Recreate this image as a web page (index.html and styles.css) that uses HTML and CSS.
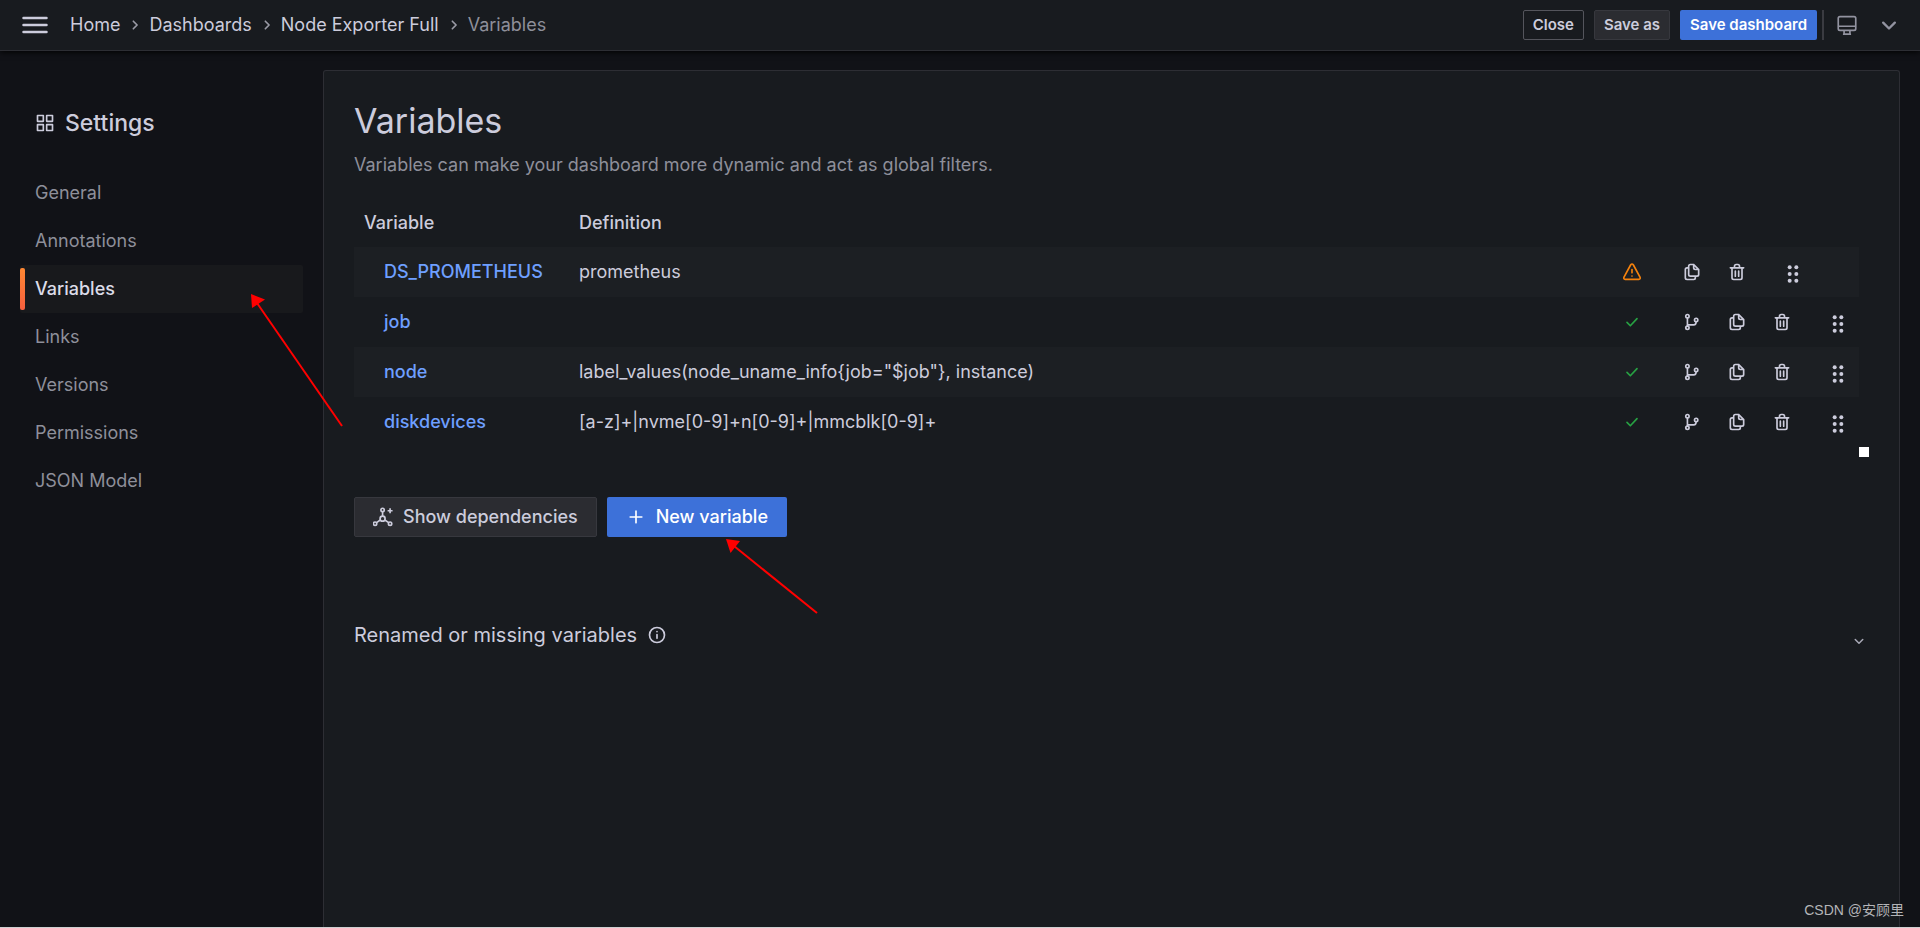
FILE: index.html
```html
<!DOCTYPE html>
<html lang="en">
<head>
<meta charset="utf-8">
<title>Variables - Node Exporter Full</title>
<link rel="stylesheet" href="styles.css">
</head>
<body>
<svg class="sprite" aria-hidden="true">
  <symbol id="apps" viewBox="0 0 24 24"><path fill="currentColor" d="M10,13H3a1,1,0,0,0-1,1v7a1,1,0,0,0,1,1h7a1,1,0,0,0,1-1V14A1,1,0,0,0,10,13ZM9,20H4V15H9ZM21,2H14a1,1,0,0,0-1,1v7a1,1,0,0,0,1,1h7a1,1,0,0,0,1-1V3A1,1,0,0,0,21,2ZM20,9H15V4h5Zm1,4H14a1,1,0,0,0-1,1v7a1,1,0,0,0,1,1h7a1,1,0,0,0,1-1V14A1,1,0,0,0,21,13Zm-1,7H15V15h5ZM10,2H3A1,1,0,0,0,2,3v7a1,1,0,0,0,1,1h7a1,1,0,0,0,1-1V3A1,1,0,0,0,10,2ZM9,9H4V4H9Z"/></symbol>
  <symbol id="copy" viewBox="0 0 24 24"><path fill="currentColor" d="M21,8.94a1.31,1.31,0,0,0-.06-.27l0-.09a1.07,1.07,0,0,0-.19-.28h0l-6-6h0a1.07,1.07,0,0,0-.28-.19.32.32,0,0,0-.09,0A.88.88,0,0,0,14.05,2H10A3,3,0,0,0,7,5V6H6A3,3,0,0,0,3,9V19a3,3,0,0,0,3,3h8a3,3,0,0,0,3-3V18h1a3,3,0,0,0,3-3V9S21,9,21,8.94ZM15,5.41,17.59,8H16a1,1,0,0,1-1-1ZM15,19a1,1,0,0,1-1,1H6a1,1,0,0,1-1-1V9A1,1,0,0,1,6,8H7v7a3,3,0,0,0,3,3h5Zm4-4a1,1,0,0,1-1,1H10a1,1,0,0,1-1-1V5a1,1,0,0,1,1-1h3V7a3,3,0,0,0,3,3h3Z"/></symbol>
  <symbol id="trash" viewBox="0 0 24 24"><path fill="currentColor" d="M10,18a1,1,0,0,0,1-1V11a1,1,0,0,0-2,0v6A1,1,0,0,0,10,18ZM20,6H16V5a3,3,0,0,0-3-3H11A3,3,0,0,0,8,5V6H4A1,1,0,0,0,4,8H5V19a3,3,0,0,0,3,3h8a3,3,0,0,0,3-3V8h1a1,1,0,0,0,0-2ZM10,5a1,1,0,0,1,1-1h2a1,1,0,0,1,1,1V6H10Zm7,14a1,1,0,0,1-1,1H8a1,1,0,0,1-1-1V8H17Zm-3-1a1,1,0,0,0,1-1V11a1,1,0,0,0-2,0v6A1,1,0,0,0,14,18Z"/></symbol>
  <symbol id="branch" viewBox="0 0 24 24"><g fill="none" stroke="currentColor" stroke-width="2"><circle cx="6.5" cy="5" r="2"/><circle cx="6.5" cy="19" r="2"/><circle cx="17" cy="9.5" r="2"/><path d="M6.5 7v10M6.500 15.500h7.500q3 0 3-4"/></g></symbol>
  <symbol id="drag" viewBox="0 0 24 24"><g fill="currentColor"><circle cx="8" cy="4" r="2.400"/><circle cx="16" cy="4" r="2.400"/><circle cx="8" cy="12" r="2.400"/><circle cx="16" cy="12" r="2.400"/><circle cx="8" cy="20" r="2.400"/><circle cx="16" cy="20" r="2.400"/></g></symbol>
  <symbol id="check" viewBox="0 0 24 24"><path fill="none" stroke="currentColor" stroke-width="2" stroke-linecap="round" stroke-linejoin="round" d="M6 12.500l4 4 8-8.500"/></symbol>
  <symbol id="warning" viewBox="0 0 24 24"><g fill="none" stroke="currentColor" stroke-width="2" stroke-linejoin="round" stroke-linecap="round"><path d="M10.300 3.600L2.400 18.200q-1 2.300 1.500 2.600h16.200q2.500-.3 1.500-2.600L13.700 3.600q-1.700-2.400-3.400 0Z"/><path d="M12 9v4M12 16.800v.1"/></g></symbol>
  <symbol id="down" viewBox="0 0 24 24"><path fill="none" stroke="currentColor" stroke-width="2" stroke-linecap="round" stroke-linejoin="round" d="M7 10l5 5 5-5"/></symbol>
  <symbol id="right" viewBox="0 0 24 24"><path fill="none" stroke="currentColor" stroke-width="2" stroke-linecap="round" stroke-linejoin="round" d="M10 7.500l4.500 4.500-4.500 4.500"/></symbol>
  <symbol id="monitor" viewBox="0 0 24 24"><g fill="none" stroke="currentColor" stroke-width="2"><rect x="1.500" y="2" width="21" height="16.500" rx="2"/><path d="M2 13.500h20M8.500 19v4M15.500 19v4M8 23h8" stroke-linecap="round"/></g></symbol>
  <symbol id="graph" viewBox="0 0 24 24"><g fill="none" stroke="currentColor" stroke-width="2"><circle cx="11.500" cy="3.500" r="2"/><circle cx="2.500" cy="20" r="2"/><circle cx="20.500" cy="20" r="2"/><circle cx="11.500" cy="14" r="3"/><path d="M11.500 5.500V11M4.200 18.800l4.600-3.200M18.800 18.800l-4.600-3.200M20.500 1.500v6M17.500 4.500h6"/></g></symbol>
  <symbol id="plus" viewBox="0 0 24 24"><path fill="none" stroke="currentColor" stroke-width="2" stroke-linecap="round" d="M12 5v14M5 12h14"/></symbol>
  <symbol id="info" viewBox="0 0 24 24"><g fill="none" stroke="currentColor" stroke-width="2" stroke-linecap="round"><circle cx="12" cy="12" r="9"/><path d="M12 11.500v4.500M12 8v.1"/></g></symbol>
</svg>

<header class="topbar">
  <button class="menu" type="button" aria-label="Open menu"><svg width="26" height="18" viewBox="0 0 26 18"><path stroke="currentColor" stroke-width="2.500" stroke-linecap="round" d="M1.500 2h23M1.500 9h23M1.500 16h23"/></svg></button>
  <nav class="crumbs" aria-label="Breadcrumbs">
    <a href="#">Home</a><svg class="sep"><use href="#right"/></svg>
    <a href="#">Dashboards</a><svg class="sep"><use href="#right"/></svg>
    <a href="#">Node Exporter Full</a><svg class="sep"><use href="#right"/></svg>
    <span class="current">Variables</span>
  </nav>
  <div class="actions">
    <button class="btn small outline" type="button">Close</button>
    <button class="btn small secondary" type="button">Save as</button>
    <button class="btn small primary" type="button">Save dashboard</button>
  </div>
  <span class="divider"></span>
  <button class="tool" type="button" aria-label="Kiosk mode"><svg class="icon"><use href="#monitor"/></svg></button>
  <button class="tool" type="button" aria-label="Toggle top bar"><svg class="icon large"><use href="#down"/></svg></button>
</header>

<div class="page">
  <aside class="sidebar">
    <h2 class="side-title"><svg class="icon"><use href="#apps"/></svg>Settings</h2>
    <nav class="side-nav">
      <a href="#">General</a>
      <a href="#">Annotations</a>
      <a href="#" class="active" aria-current="page">Variables</a>
      <a href="#">Links</a>
      <a href="#">Versions</a>
      <a href="#">Permissions</a>
      <a href="#">JSON Model</a>
    </nav>
  </aside>
  <main class="panel">
    <h1>Variables</h1>
    <p class="lead">Variables can make your dashboard more dynamic and act as global filters.</p>
    <div class="table-wrap">
      <table class="vars">
        <thead><tr><th class="col-name" scope="col">Variable</th><th scope="col">Definition</th><td class="col-tools"></td></tr></thead>
        <tbody>
          <tr>
            <td class="name"><a href="#">DS_PROMETHEUS</a></td><td>prometheus</td>
            <td><div class="tools"><svg class="icon warn"><use href="#warning"/></svg>
              <button type="button" aria-label="Duplicate"><svg class="icon"><use href="#copy"/></svg></button>
              <button type="button" aria-label="Remove"><svg class="icon"><use href="#trash"/></svg></button>
              <svg class="icon handle"><use href="#drag"/></svg></div></td>
          </tr>
          <tr>
            <td class="name"><a href="#">job</a></td><td></td>
            <td><div class="tools"><svg class="icon ok"><use href="#check"/></svg>
              <button type="button" aria-label="Show usages"><svg class="icon"><use href="#branch"/></svg></button>
              <button type="button" aria-label="Duplicate"><svg class="icon"><use href="#copy"/></svg></button>
              <button type="button" aria-label="Remove"><svg class="icon"><use href="#trash"/></svg></button>
              <svg class="icon handle"><use href="#drag"/></svg></div></td>
          </tr>
          <tr>
            <td class="name"><a href="#">node</a></td><td>label_values(node_uname_info{job="$job"}, instance)</td>
            <td><div class="tools"><svg class="icon ok"><use href="#check"/></svg>
              <button type="button" aria-label="Show usages"><svg class="icon"><use href="#branch"/></svg></button>
              <button type="button" aria-label="Duplicate"><svg class="icon"><use href="#copy"/></svg></button>
              <button type="button" aria-label="Remove"><svg class="icon"><use href="#trash"/></svg></button>
              <svg class="icon handle"><use href="#drag"/></svg></div></td>
          </tr>
          <tr>
            <td class="name"><a href="#">diskdevices</a></td><td>[a-z]+|nvme[0-9]+n[0-9]+|mmcblk[0-9]+</td>
            <td><div class="tools"><svg class="icon ok"><use href="#check"/></svg>
              <button type="button" aria-label="Show usages"><svg class="icon"><use href="#branch"/></svg></button>
              <button type="button" aria-label="Duplicate"><svg class="icon"><use href="#copy"/></svg></button>
              <button type="button" aria-label="Remove"><svg class="icon"><use href="#trash"/></svg></button>
              <svg class="icon handle"><use href="#drag"/></svg></div></td>
          </tr>
        </tbody>
      </table>
      <span class="corner"></span>
    </div>
    <div class="buttons">
      <button class="btn secondary" type="button"><svg class="icon"><use href="#graph"/></svg>Show dependencies</button>
      <button class="btn primary" type="button"><svg class="icon"><use href="#plus"/></svg>New variable</button>
    </div>
    <button class="collapse" type="button" aria-expanded="false">
      <span>Renamed or missing variables</span>
      <svg class="icon"><use href="#info"/></svg>
      <svg class="icon caret"><use href="#down"/></svg>
    </button>
  </main>
</div>

<svg class="arrow arrow-nav" width="94" height="134" viewBox="0 0 94 134" aria-hidden="true"><path d="M6 9L91 132" stroke="#f00" stroke-width="2"/><path d="M0 0l14 5.500L1 14Z" fill="#f00"/></svg>
<svg class="arrow arrow-new" width="94" height="76" viewBox="0 0 94 76" aria-hidden="true"><path d="M8 7L91 74" stroke="#f00" stroke-width="2"/><path d="M0 0l14 2L4.500 14Z" fill="#f00"/></svg>
<div class="watermark">CSDN @安顾里</div>
</body>
</html>
```
FILE: styles.css
```css
* { box-sizing: border-box; }

body {
  position: relative;
  display: flex;
  flex-direction: column;
  min-height: 100vh;
  margin: 0;
  border-bottom: 1px solid #cfcfd1;
  background: #111217;
  color: #ccccdc;
  font: 18px/24px Inter, "Noto Sans CJK SC", sans-serif;
}

a { color: inherit; text-decoration: none; }
button { font: inherit; color: inherit; background: none; border: 0; padding: 0; cursor: pointer; }
h1, h2, p { margin: 0; }
svg { display: block; flex: none; }

.sprite { position: absolute; width: 0; height: 0; }
.icon { width: 20px; height: 20px; }
.icon.large { width: 28px; height: 28px; }

/* Top bar */
.topbar {
  display: flex;
  align-items: center;
  height: 51px;
  padding: 0 17px 0 22px;
  background: #181b1f;
  border-bottom: 1px solid #2d2e34;
  box-shadow: 0 1px 6px #000;
}
.menu { margin-right: 22px; }
.crumbs { display: flex; align-items: center; flex: 1; }
.sep { width: 20px; height: 20px; margin: 0 4px 0 5px; color: #9a9ba6; }
.current { color: #8e8f9a; }
.actions { display: flex; gap: 10px; }
.divider { width: 2px; height: 30px; margin: 0 13px 0 5px; background: #3a3b41; }
.tool { color: #9293a0; }
.tool + .tool { margin-left: 18px; }

.btn {
  display: flex;
  align-items: center;
  gap: 10px;
  height: 40px;
  padding: 0 18px;
  border: 1px solid transparent;
  border-radius: 2px;
  font-weight: 500;
  white-space: nowrap;
}
.btn.small { height: 30px; padding: 0 9px; font-size: 15px; font-weight: 600; }
.outline { border-color: #54555c; }
.secondary { background: #2b2c31; border-color: #37383e; }
.primary { background: #3d71d9; color: #fff; }

/* Page */
.page { display: flex; flex: 1; padding: 19px 20px 0; }
.sidebar { flex: none; width: 303px; padding-right: 20px; }
.side-title {
  display: flex;
  align-items: center;
  gap: 10px;
  padding: 38px 0 0 15px;
  font-size: 23px;
  line-height: 30px;
  font-weight: 500;
}
.side-nav { margin-top: 31px; color: #8e8f9a; }
.side-nav a { display: block; position: relative; padding: 12px 15px; border-radius: 2px; }
.side-nav .active { background: #18191c; color: #dcdce8; font-weight: 500; }
.side-nav .active::before {
  content: "";
  position: absolute;
  left: 0;
  top: 3px;
  bottom: 3px;
  width: 5px;
  border-radius: 2px;
  background: linear-gradient(#ff8833, #f55f3e);
}

.panel {
  flex: 1;
  min-width: 0;
  padding: 30px 35px 30px 30px;
  background: #181b1f;
  border: 1px solid #2d2e34;
  border-bottom: 0;
  border-radius: 3px 3px 0 0;
}
h1 { font-size: 34px; line-height: 40px; font-weight: 400; }
.lead { margin-top: 12px; color: #8e8f9a; }

/* Variables table */
.table-wrap { display: flex; align-items: flex-end; margin-top: 22px; }
.vars { flex: 1; border-collapse: collapse; table-layout: fixed; width: 100%; }
.vars th { height: 48px; padding: 0 10px; text-align: left; font-weight: 500; }
.vars td { padding: 0 10px; }
.vars tbody tr { height: 50px; }
.vars tbody tr:nth-child(odd) { background: #1c1f23; }
.col-name { width: 215px; }
.vars .col-tools { width: 247px; }
.vars .name { padding-left: 30px; color: #6e9fff; font-weight: 500; white-space: nowrap; }
.tools { display: flex; align-items: center; gap: 25px; }
.tools > :first-child { margin-right: 15px; }
.handle { margin: 3px 0 0 11px; }
.warn { color: #f5820d; }
.ok { color: #27a143; }
.corner { width: 10px; height: 10px; margin: 0 -5px -10px 0; background: #fff; }

.buttons { display: flex; gap: 10px; margin-top: 50px; }
.collapse {
  display: flex;
  align-items: center;
  gap: 10px;
  width: 100%;
  margin-top: 83px;
  font-size: 20px;
  line-height: 28px;
}
.caret { width: 18px; height: 18px; margin: 12px -4px 0 auto; color: #a8a9b6; }

/* Annotations over the page */
.arrow { position: absolute; }
.arrow-nav { left: 251px; top: 294px; }
.arrow-new { left: 726px; top: 539px; }
.watermark {
  position: absolute;
  right: 16px;
  bottom: 6px;
  color: #b4b5b8;
  font: 14px/22px "Liberation Sans", "Noto Sans CJK SC", sans-serif;
}
```
